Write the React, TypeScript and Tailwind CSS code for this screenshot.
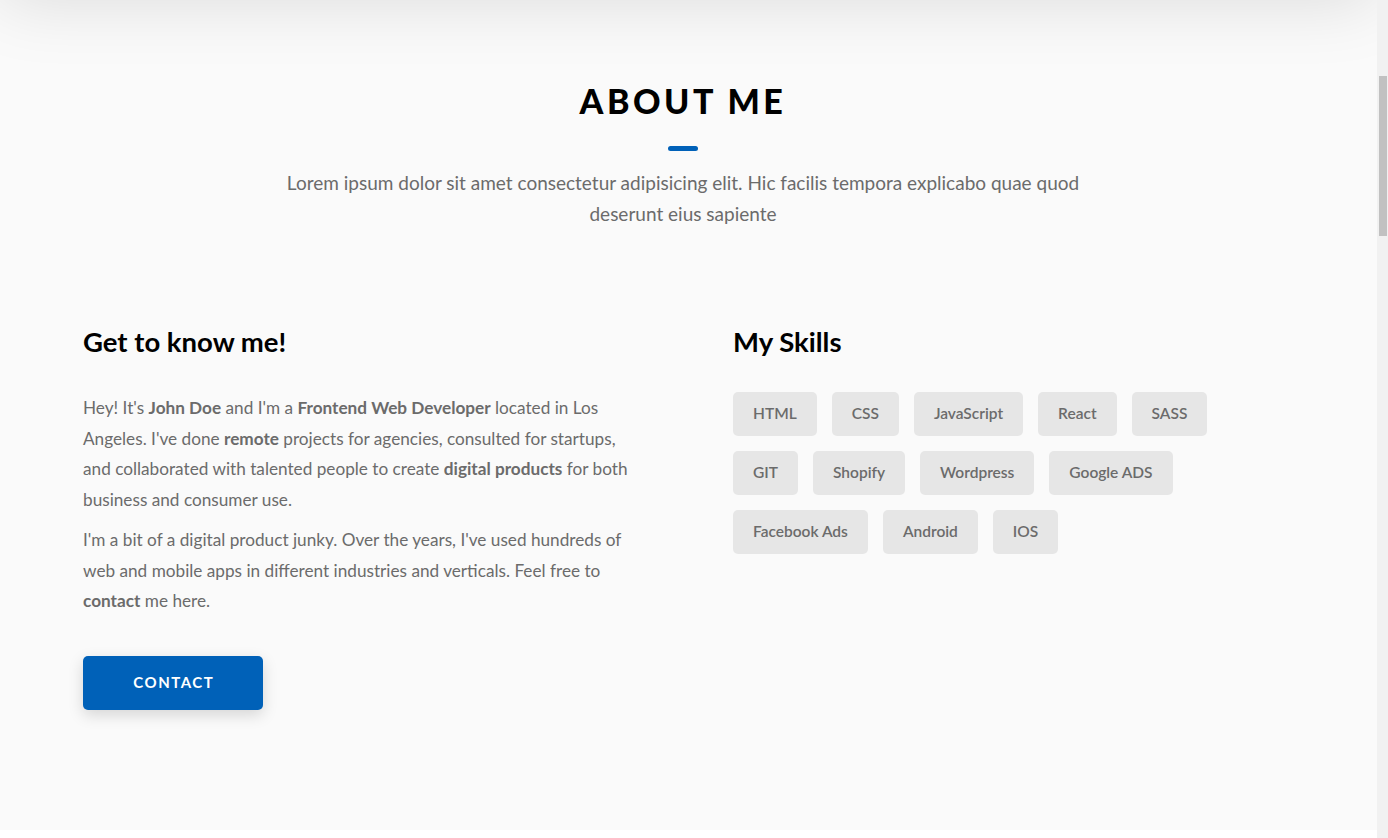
import React from "react";

const skills = [
  "HTML",
  "CSS",
  "JavaScript",
  "React",
  "SASS",
  "GIT",
  "Shopify",
  "Wordpress",
  "Google ADS",
  "Facebook Ads",
  "Android",
  "IOS",
];

export default function App() {
  return (
    <div
      className="flex h-[838px] w-full overflow-hidden bg-white"
      style={{ fontFamily: "Lato, 'Noto Sans', sans-serif" }}
    >
      <div className="flex-1 flex flex-col min-w-0">
        <section className="relative h-[830px] bg-[#fafafa] overflow-hidden pt-[77px]">
          <div className="absolute left-0 right-0 top-[-100px] h-[100px] bg-white shadow-[0_0_70px_rgba(0,0,0,0.13)]" />
          <div className="w-[1366px]">
            <h2 className="text-center text-[34px] leading-[48px] font-black tracking-[3.5px] text-black">
              ABOUT ME
            </h2>
            <div className="mx-auto mt-[21px] h-[5px] w-[30px] rounded-full bg-[#0061b8]" />
            <p className="mx-auto mt-[16px] max-w-[830px] text-center text-[19px] leading-[31px] text-[#6b6b6b]">
              Lorem ipsum dolor sit amet consectetur adipisicing elit. Hic facilis tempora explicabo quae quod
              deserunt eius sapiente
            </p>
            <div className="mx-auto mt-[96px] grid max-w-[1200px] grid-cols-2 gap-x-[100px]">
              <div>
                <h3 className="text-[27.5px] leading-[34px] font-bold text-black">Get to know me!</h3>
                <div className="mt-[34px] text-[17.2px] leading-[30.5px] text-[#6b6b6b]">
                  <p>
                    Hey! It's <strong className="font-bold">John Doe</strong> and I'm a{" "}
                    <strong className="font-bold">Frontend Web Developer</strong> located in Los Angeles. I've done{" "}
                    <strong className="font-bold">remote</strong> projects for agencies, consulted for startups, and
                    collaborated with talented people to create{" "}
                    <strong className="font-bold">digital products</strong> for both business and consumer use.
                  </p>
                  <p className="mt-[10px]">
                    I'm a bit of a digital product junky. Over the years, I've used hundreds of web and mobile apps in
                    different industries and verticals. Feel free to <strong className="font-bold">contact</strong>{" "}
                    me here.
                  </p>
                </div>
                <button className="mt-[39px] flex h-[54px] w-[180px] items-center justify-center rounded-[5px] bg-[#0061b8] pl-[1.5px] text-[15px] font-bold tracking-[1.5px] text-white shadow-[0_5px_15px_rgba(0,0,0,0.15)]">
                  CONTACT
                </button>
              </div>
              <div>
                <h3 className="text-[27.5px] leading-[34px] font-bold text-black">My Skills</h3>
                <div className="mt-[33px] flex flex-wrap">
                  {skills.map((s) => (
                    <div
                      key={s}
                      className="mb-[15px] mr-[15px] flex h-[44px] items-center rounded-[5px] bg-[#e6e6e6] px-[20px] text-[15.5px] font-semibold text-[#6b6b6b]"
                    >
                      {s}
                    </div>
                  ))}
                </div>
              </div>
            </div>
          </div>
        </section>
      </div>
      <div className="w-[11px] shrink-0 bg-[#f1f1f1] pt-[76px] pl-[2px]">
        <div className="h-[160px] w-[8px] bg-[#c1c1c1]" />
      </div>
    </div>
  );
}
